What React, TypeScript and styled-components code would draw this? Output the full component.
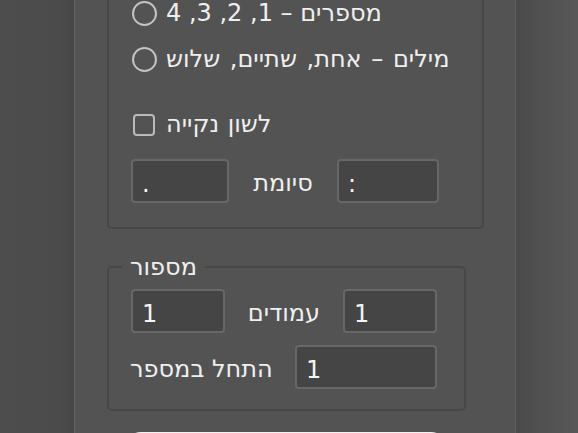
import styled, { createGlobalStyle } from "styled-components";

const GlobalStyle = createGlobalStyle`
  html, body {
    margin: 0;
    padding: 0;
    background: #4b4b4b;
    overflow: hidden;
  }
  body {
    font-family: "DejaVu Sans", "Liberation Sans", sans-serif;
  }
`;

type FieldProps = {
    value: string;
    width: number;
};

function Field({ value, width }: FieldProps): JSX.Element {
    return (
        <FieldBox $width={width}>
            <FieldText>{value}</FieldText>
        </FieldBox>
    );
}

export default function App(): JSX.Element {
    return (
        <Screen>
            <GlobalStyle />
            <LeftShade />
            <Panel>
                <StyleGroup>
                    <OptionRow>
                        <Radio />
                        <OptionText dir="rtl">מספרים – 1, 2, 3, 4</OptionText>
                    </OptionRow>
                    <OptionRow $gap={21}>
                        <Radio />
                        <OptionText dir="rtl" $spread={2}>מילים – אחת, שתיים, שלוש</OptionText>
                    </OptionRow>
                    <OptionRow $gap={40}>
                        <Checkbox />
                        <OptionText dir="rtl" $spread={1}>לשון נקייה</OptionText>
                    </OptionRow>
                    <FieldRow $gap={22} $width={308}>
                        <Field value="." width={98} />
                        <Label>סיומת</Label>
                        <Field value=":" width={102} />
                    </FieldRow>
                </StyleGroup>

                <NumberGroup>
                    <Legend>מספור</Legend>
                    <FieldRow $width={306}>
                        <Field value="1" width={94} />
                        <Label>עמודים</Label>
                        <Field value="1" width={94} />
                    </FieldRow>
                    <FieldRow $gap={12} $width={306}>
                        <Label $shift={-1}>התחל במספר</Label>
                        <Field value="1" width={142} />
                    </FieldRow>
                </NumberGroup>

                <OkButton />
            </Panel>
            <RightShade />
        </Screen>
    );
}

const Screen = styled.div`
  display: flex;
  width: 578px;
  height: 433px;
  overflow: hidden;
  color: #efefef;
  font-size: 24px;
`;

const LeftShade = styled.div`
  width: 74px;
  flex: none;
  background: linear-gradient(to right, #4d4d4d 0%, #4b4b4b 80%, #474747 100%);
`;

const RightShade = styled.div`
  flex: 1;
  background: linear-gradient(to right, #4a4a4a 0%, #515151 40%, #575757 100%);
`;

const Panel = styled.div`
  width: 442px;
  flex: none;
  display: flex;
  flex-direction: column;
  padding-left: 32px;
  box-sizing: border-box;
  background: #535353;
  border-left: 1px solid #626262;
  border-right: 1px solid #5e5e5e;
`;

const StyleGroup = styled.div`
  width: 377px;
  box-sizing: border-box;
  display: flex;
  flex-direction: column;
  padding: 1px 0 24px 22px;
  border: 2px solid #474747;
  border-top: 0;
  border-radius: 0 0 5px 5px;
`;

const OptionRow = styled.div<{ $gap?: number }>`
  display: flex;
  align-items: center;
  height: 25px;
  margin-top: ${(p) => p.$gap ?? 0}px;
`;

const Radio = styled.span`
  width: 25px;
  height: 25px;
  margin-left: 1px;
  box-sizing: border-box;
  border: 2px solid #c3c3c3;
  border-radius: 50%;
  flex: none;
`;

const Checkbox = styled.span`
  width: 22px;
  height: 22px;
  margin: 0 2px 0 2px;
  box-sizing: border-box;
  border: 2px solid #bcbcbc;
  border-radius: 4px;
  flex: none;
`;

const OptionText = styled.span<{ $spread?: number }>`
  margin-left: 9px;
  line-height: 25px;
  white-space: nowrap;
  word-spacing: ${(p) => p.$spread ?? 0}px;
`;

const FieldRow = styled.div<{ $gap?: number; $width: number }>`
  display: flex;
  align-items: center;
  justify-content: space-between;
  width: ${(p) => p.$width}px;
  margin-top: ${(p) => p.$gap ?? 0}px;
`;

const FieldBox = styled.div<{ $width: number }>`
  width: ${(p) => p.$width}px;
  height: 44px;
  box-sizing: border-box;
  display: flex;
  align-items: center;
  padding: 5px 0 0 9px;
  background: #454545;
  border: 2px solid #676767;
  border-radius: 4px;
`;

const FieldText = styled.span`
  color: #f4f4f4;
  line-height: 24px;
`;

const Label = styled.span<{ $shift?: number }>`
  margin-left: ${(p) => p.$shift ?? 0}px;
  padding-top: 4px;
  white-space: nowrap;
  line-height: 24px;
`;

const NumberGroup = styled.fieldset`
  width: 359px;
  box-sizing: border-box;
  margin: 26px 0 0 0;
  padding: 10px 26px 20px 22px;
  border: 2px solid #474747;
  border-radius: 5px;
  min-inline-size: 0;
`;

const Legend = styled.legend`
  margin-left: -9px;
  padding: 0 8px;
  line-height: 24px;
  font-size: 24px;
`;

const OkButton = styled.div`
  width: 322px;
  height: 32px;
  flex: none;
  margin: 21px 0 0 18px;
  background: #f2f2f2;
  border-radius: 16px;
`;
